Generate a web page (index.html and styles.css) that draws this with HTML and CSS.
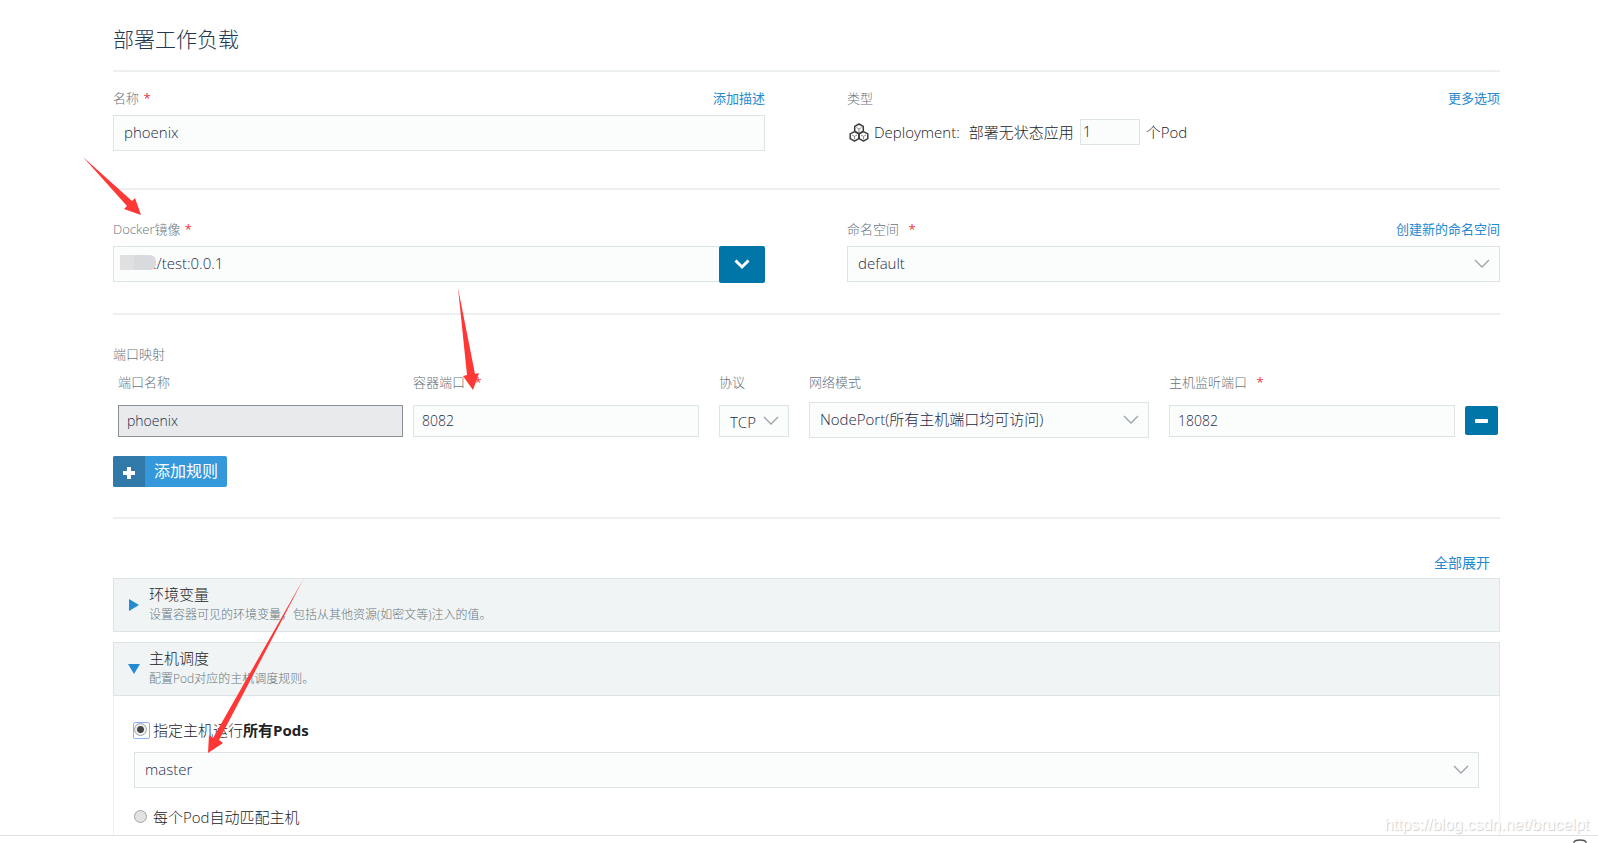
FILE: index.html
```html
<!DOCTYPE html>
<html lang="zh-CN">
<head>
<meta charset="utf-8">
<title>部署工作负载</title>
<link rel="stylesheet" href="styles.css">
</head>
<body>
<svg class="defs" width="0" height="0" aria-hidden="true">
  <symbol id="chev" viewBox="0 0 16 10"><path d="M1 1l7 7 7-7" fill="none" stroke="#9aa3a8" stroke-width="1.3"/></symbol>
</svg>
<main class="page">
  <h1 class="title">部署工作负载</h1>

  <section class="section cols general">
    <div class="field">
      <div class="head"><label for="name">名称 <span class="req">*</span></label><a href="#">添加描述</a></div>
      <input class="box" id="name" type="text" value="phoenix">
    </div>
    <div class="field">
      <div class="head"><label for="scale">类型</label><a href="#">更多选项</a></div>
      <div class="kind">
        <svg class="cubes" viewBox="0 0 20 19" aria-hidden="true">
          <g fill="#fff" stroke="#3c3c3e" stroke-width="1.5" stroke-linejoin="round">
            <path d="M10 1l4.300 2.400v4.800L10 10.600 5.700 8.200V3.400z"/>
            <path d="M5.500 8.600l4.300 2.300v4.800l-4.300 2.400-4.300-2.400v-4.800z"/>
            <path d="M14.500 8.600l4.300 2.300v4.800l-4.300 2.400-4.300-2.400v-4.800z"/>
          </g>
          <path d="M7.500 4.500L10 6l2.500-1.500M10 6v3M3 12l2.500 1.400L8 12M5.500 13.400v3M12 12l2.500 1.400L17 12M14.500 13.400v3" fill="none" stroke="#8f8a86"/>
        </svg>
        <span class="kindname">Deployment:</span>
        <span>部署无状态应用</span>
        <input class="scale" id="scale" type="text" value="1">
        <span>个Pod</span>
      </div>
    </div>
  </section>

  <section class="section cols image">
    <div class="field">
      <div class="head"><label for="image">Docker镜像 <span class="req">*</span></label></div>
      <div class="combo">
        <input class="box" id="image" type="text" value="./test:0.0.1">
        <span class="mask"></span>
        <button class="drop" type="button" aria-label="选择镜像"><svg width="16" height="11" viewBox="0 0 16 11"><path d="M1.500 1.500L8 8l6.500-6.500" fill="none" stroke="#fff" stroke-width="3"/></svg></button>
      </div>
    </div>
    <div class="field">
      <div class="head"><label for="ns">命名空间 <span class="req far">*</span></label><a href="#">创建新的命名空间</a></div>
      <div class="pick"><select class="box" id="ns"><option>default</option></select><svg class="chev"><use href="#chev"/></svg></div>
    </div>
  </section>

  <section class="section ports">
    <div class="label">端口映射</div>
    <div class="rule">
      <div class="cell"><label for="pname">端口名称</label><input class="small locked" id="pname" type="text" value="phoenix" readonly></div>
      <div class="cell near"><label for="cport">容器端口 <span class="req far">*</span></label><input class="small" id="cport" type="text" value="8082"></div>
      <div class="cell wide proto"><label for="proto">协议</label><div class="pick"><select class="small" id="proto"><option>TCP</option></select><svg class="chev"><use href="#chev"/></svg></div></div>
      <div class="cell wide"><label for="mode">网络模式</label><div class="pick raised"><select class="box" id="mode"><option>NodePort(所有主机端口均可访问)</option></select><svg class="chev"><use href="#chev"/></svg></div></div>
      <div class="cell wide"><label for="hport">主机监听端口 <span class="req far">*</span></label><input class="small" id="hport" type="text" value="18082"></div>
      <button class="remove" type="button" aria-label="删除规则"><svg width="13" height="4"><rect width="13" height="4" rx="1" fill="#fff"/></svg></button>
    </div>
    <button class="add" type="button">
      <span class="plus"><svg width="12" height="12" viewBox="0 0 12 12"><path d="M6 0v12M0 6h12" stroke="#fff" stroke-width="4"/></svg></span>
      <span class="addtext">添加规则</span>
    </button>
  </section>

  <div class="expand"><a href="#">全部展开</a></div>

  <section class="panel">
    <button class="bar" type="button" aria-expanded="false">
      <svg width="12" height="12" viewBox="0 0 12 12"><path d="M1 0l10 6-10 6z" fill="#248bd3"/></svg>
      <span class="caption"><span class="name">环境变量</span><span class="note">设置容器可见的环境变量，包括从其他资源(如密文等)注入的值。</span></span>
    </button>
  </section>

  <section class="panel">
    <button class="bar" type="button" aria-expanded="true">
      <svg width="12" height="12" viewBox="0 0 12 12"><path d="M0 1h12L6 11z" fill="#248bd3"/></svg>
      <span class="caption"><span class="name">主机调度</span><span class="note">配置Pod对应的主机调度规则。</span></span>
    </button>
    <div class="body">
      <label class="choice"><input type="radio" name="host" checked><span>指定主机运行<b>所有Pods</b></span></label>
      <div class="pick"><select class="box" aria-label="主机"><option>master</option></select><svg class="chev"><use href="#chev"/></svg></div>
      <label class="choice"><input type="radio" name="host"><span>每个Pod自动匹配主机</span></label>
    </div>
  </section>
</main>
<footer class="foot"><svg width="14" height="5" viewBox="0 0 14 5"><path d="M1 5V3Q2 1 7 1t6 2v2" fill="none" stroke="#555" stroke-width="1.300"/></svg></footer>

<svg class="arrows" width="500" height="780" viewBox="0 0 500 780" fill="#ff3836" aria-hidden="true">
  <path d="M83 157L132 201l3-3 6 17-17-6 3-3z"/>
  <path d="M458 288L475 374l4-1-6 17-10-14 4-1z"/>
  <path d="M304 578L219 740l4 3-15 10 1-18 4 3z"/>
</svg>
<div class="watermark">https://blog.csdn.net/brucelpt</div>
</body>
</html>
```
FILE: styles.css
```css
* { box-sizing: border-box; }

body {
  margin: 0;
  height: 100vh;
  display: flex;
  flex-direction: column;
  position: relative;
  overflow: hidden;
  background: #fff;
  color: #222224;
  font: 300 15px/20px "Open Sans", "Noto Sans CJK SC", sans-serif;
}

input, select, button { font: inherit; color: inherit; margin: 0; }
a { color: #2589d0; text-decoration: none; font-weight: 400; }
.defs { position: absolute; }

.page {
  flex: 1;
  min-height: 0;
  overflow: hidden;
  padding: 24px 98px 0 113px;
}

.title {
  margin: 0;
  height: 48px;
  border-bottom: 2px solid #ecf0f0;
  font-size: 21px;
  line-height: 30px;
  font-weight: 300;
  color: #223750;
}

.section { border-bottom: 2px solid #ecf0f0; }
.cols { display: grid; grid-template-columns: 652fr 653fr; column-gap: 82px; }
.general { padding: 16px 0 37px; }
.image { padding: 29px 0 30px; }

.head {
  display: flex;
  justify-content: space-between;
  height: 27px;
  font-size: 13px;
}
.head label, .label, .cell label { font-size: 13px; color: #68747c; }
.req { color: #f0343c; font-weight: 400; margin-left: 1px; }
.far { margin-left: 6px; }

.box, .small {
  display: block;
  width: 100%;
  height: 36px;
  padding: 0 10px 2px;
  border: 1px solid #dce4e4;
  border-radius: 0;
  background: #fbfdfc;
  color: #1d2a48;
  appearance: none;
  outline: none;
}
.small { height: 32px; padding: 0 8px 2px; font-size: 14px; }
.locked { background: #e8eaec; border-color: #8a9298; }

.pick { position: relative; }
.chev {
  position: absolute;
  right: 10px;
  top: 13px;
  width: 16px;
  height: 10px;
  pointer-events: none;
}

.kind { display: flex; align-items: center; height: 34px; padding-left: 2px; }
.cubes { width: 20px; height: 19px; margin-right: 5px; }
.kindname { margin-right: 9px; }
.scale {
  width: 60px;
  height: 26px;
  margin: 0 6px;
  padding: 0 2px 2px;
  border: 1px solid #dce4e4;
  background: #fbfdfc;
}

.combo { display: flex; position: relative; height: 37px; }
.combo .box { flex: 1; min-width: 0; border-right: 0; padding-left: 39px; }
.mask {
  position: absolute;
  left: 7px;
  top: 9px;
  width: 36px;
  height: 15px;
  border-radius: 0 6px 6px 0;
  background: linear-gradient(90deg, #e0e0e2 40%, #d8dade 40%);
}
.drop, .remove {
  display: flex;
  align-items: center;
  justify-content: center;
  border: 0;
  border-radius: 2px;
  padding: 0;
  background: #0075a8;
}
.drop { width: 46px; height: 37px; }

.ports { padding: 29px 0 30px; }
.label { height: 28px; }
.rule {
  display: grid;
  grid-template-columns: 285fr 296fr 90px 360fr 306fr 43px;
  align-items: start;
  padding: 0 2px 0 5px;
}
.near { margin-left: 10px; }
.wide { margin-left: 20px; }
.cell label { display: block; height: 33px; }
.raised { margin-top: -3px; }
.proto .small { padding: 2px 10px 0; font-size: 15px; }
.proto .chev { top: 11px; }
.remove { width: 33px; height: 29px; margin: 34px 0 0 10px; }
.add {
  display: flex;
  margin-top: 18px;
  height: 31px;
  padding: 0;
  border: 0;
  border-radius: 2px;
  overflow: hidden;
  background: #3498db;
  color: #fff;
  font-size: 16px;
  font-weight: 400;
}
.plus {
  display: flex;
  align-items: center;
  justify-content: center;
  width: 32px;
  height: 31px;
  padding-top: 3px;
  background: #3079a9;
}
.addtext { line-height: 30px; padding: 0 9px; }

.expand { padding: 34px 10px 5px; text-align: right; font-size: 14px; }

.panel { margin-bottom: 10px; }
.bar {
  display: flex;
  align-items: center;
  width: 100%;
  height: 54px;
  padding: 0 14px;
  gap: 9px;
  border: 1px solid #dce4e4;
  background: #f0f4f5;
  text-align: left;
}
.caption { padding-bottom: 3px; }
.name, .note { display: block; }
.name { line-height: 22px; }
.note { font-size: 12px; line-height: 20px; color: #68747c; }

.body { padding: 24px 20px; border: solid #eceff0; border-width: 0 1px; }
.choice { display: flex; align-items: center; gap: 6px; height: 20px; }
.choice b { font-weight: 700; }
.choice input {
  appearance: none;
  width: 13px;
  height: 13px;
  margin-bottom: 2px;
  border: 1px solid #a4a4a4;
  border-radius: 50%;
  background: #e2e2e2;
}
.choice input:checked {
  background: radial-gradient(circle, #444 0 3px, #ececec 4px);
}
.choice input:checked::before {
  content: "";
  display: block;
  width: 15px;
  height: 15px;
  margin: -2px;
  border: 1px solid #8db2f2;
  border-radius: 2px;
}
.body .pick { margin: 12px 0 19px; }

.foot { height: 8px; border-top: 1px solid #dfe1e2; display: flex; justify-content: flex-end; padding: 3px 11px 0; }

.arrows { position: absolute; left: 0; top: 0; pointer-events: none; }
.watermark {
  position: absolute;
  right: 9px;
  bottom: 8px;
  color: #fff;
  text-shadow: 1px 1px 1px #ccc;
  font: 400 16px/20px "Liberation Sans", sans-serif;
}
```
